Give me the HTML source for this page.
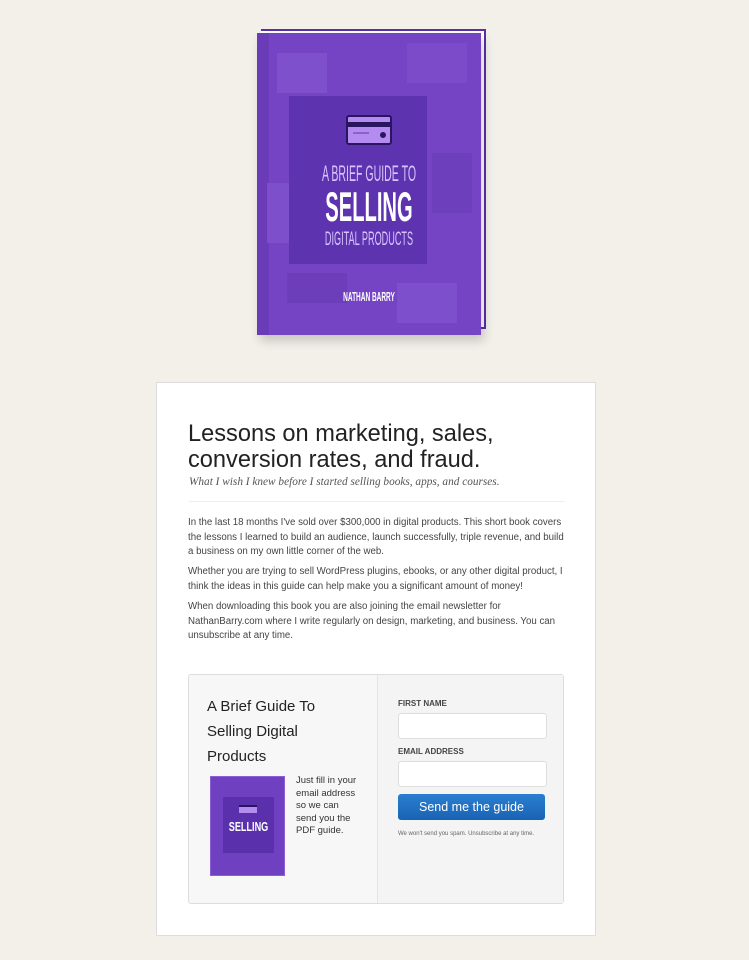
<!DOCTYPE html>
<html><head><meta charset="utf-8"><style>
*{margin:0;padding:0;box-sizing:border-box}
body{width:749px;height:960px;background:#f3f0ea;position:relative;overflow:hidden;font-family:"Liberation Sans",sans-serif;color:#333}
.abs{position:absolute}
.book{left:257px;top:29px;width:229px;height:306px}
.cover{left:0;top:4px;width:224px;height:302px;background:#7544c4;box-shadow:3px 6px 10px rgba(0,0,0,.18)}
.pages{left:4px;top:0;width:225px;height:300px;background:#fff;border:2px solid #5a2fa8;border-left:none}
.blk{position:absolute}
.inner{left:32px;top:63px;width:138px;height:168px;background:#5d33b0}
.t{position:absolute;width:100%;text-align:center;color:#d9c4ff;font-family:"Liberation Sans Narrow","Liberation Sans",sans-serif;transform:scaleX(.48)}
.card{left:156px;top:382px;width:440px;height:554px;background:#fff;border:1px solid #ddd}
h1{position:absolute;left:31px;top:38px;font-weight:normal;font-size:23.6px;line-height:26px;color:#222;font-family:"Liberation Sans",sans-serif}
.sub{position:absolute;left:32px;top:93px;font-family:"Liberation Serif",serif;font-style:italic;font-size:11.3px;color:#555}
.hr{position:absolute;left:32px;top:118px;width:376px;height:1px;background:#eee}
.p{position:absolute;left:31px;font-size:9.7px;line-height:14.5px;color:#444;white-space:nowrap}
.form{left:31px;top:291px;width:376px;height:230px;border:1px solid #ddd;border-radius:3px;background:#f7f7f7}
.right{left:188px;top:0;width:186px;height:228px;border-left:1px solid #e4e4e4;background:#f4f4f4}
.lab{position:absolute;left:20px;font-size:8px;font-weight:bold;color:#444}
.inp{position:absolute;left:20px;width:149px;height:26px;background:#fff;border:1px solid #ddd;border-radius:3px}
.btn{position:absolute;left:20px;top:119px;width:147px;height:26px;border-radius:3px;background:linear-gradient(#2a7fd0,#1a62b3);color:#fff;font-size:12.5px;text-align:center;line-height:26px}
</style></head><body>
<div class="abs book">
 <div class="abs pages"></div>
 <div class="abs cover">
  <div class="blk" style="left:0;top:0;width:12px;height:302px;background:#6a3cb8"></div>
  <div class="blk" style="left:20px;top:20px;width:50px;height:40px;background:#7f50cc"></div>
  <div class="blk" style="left:150px;top:10px;width:60px;height:40px;background:#7b4bc9"></div>
  <div class="blk" style="left:10px;top:150px;width:25px;height:60px;background:#7e4fcb"></div>
  <div class="blk" style="left:175px;top:120px;width:40px;height:60px;background:#6d3fbd"></div>
  <div class="blk" style="left:30px;top:240px;width:60px;height:30px;background:#6c3eba"></div>
  <div class="blk" style="left:140px;top:250px;width:60px;height:40px;background:#7e4fcc"></div>
  <div class="abs inner"></div>
  <div class="blk" style="left:89px;top:82px;width:46px;height:30px;background:#b48cf0;border:2px solid #2a1560;border-radius:3px">
   <div style="position:absolute;left:0;top:5px;width:100%;height:5px;background:#2a1560"></div>
   <div style="position:absolute;left:5px;top:15px;width:16px;height:2px;background:#8a62cc"></div>
   <div style="position:absolute;right:4px;top:15px;width:6px;height:6px;border-radius:50%;background:#2a1560"></div>
  </div>
  <div class="t" style="top:128px;font-size:22px">A BRIEF GUIDE TO</div>
  <div class="t" style="top:150px;font-size:42px;font-weight:bold;color:#fff">SELLING</div>
  <div class="t" style="top:196px;font-size:19px">DIGITAL PRODUCTS</div>
  <div class="t" style="top:256px;font-size:13px;color:#fff;font-weight:bold;transform:scaleX(.5)">NATHAN BARRY</div>
 </div>
</div>
<div class="abs card">
 <h1>Lessons on marketing, sales,<br>conversion rates, and fraud.</h1>
 <div class="sub">What I wish I knew before I started selling books, apps, and courses.</div>
 <div class="hr"></div>
 <div class="p" style="top:133px">In the last 18 months I've sold over $300,000 in digital products. This short book covers<br>the lessons I learned to build an audience, launch successfully, triple revenue, and build<br>a business on my own little corner of the web.</div>
 <div class="p" style="top:182px">Whether you are trying to sell WordPress plugins, ebooks, or any other digital product, I<br>think the ideas in this guide can help make you a significant amount of money!</div>
 <div class="p" style="top:217px">When downloading this book you are also joining the email newsletter for<br>NathanBarry.com where I write regularly on design, marketing, and business. You can<br>unsubscribe at any time.</div>
 <div class="abs form">
  <div class="abs" style="left:18px;top:19px;font-size:15px;line-height:25px;color:#222">A Brief Guide To<br>Selling Digital<br>Products</div>
  <div class="abs" style="left:21px;top:101px;width:75px;height:100px;background:#6f41c0;border:1px solid #8a5fd6">
   <div class="abs" style="left:12px;top:20px;width:51px;height:56px;background:#5a30ad"></div>
   <div class="abs" style="left:28px;top:28px;width:18px;height:8px;background:#b48cf0;border-top:2px solid #2a1560"></div>
   <div class="abs" style="left:0;top:42px;width:75px;text-align:center;color:#fff;font-size:13px;font-weight:bold;transform:scaleX(.7)">SELLING</div>
  </div>
  <div class="abs" style="left:107px;top:100px;font-size:9.5px;line-height:12.6px;color:#333">Just fill in your<br>email address<br>so we can<br>send you the<br>PDF guide.</div>
  <div class="abs right">
   <div class="lab" style="top:24px">FIRST NAME</div>
   <div class="inp" style="top:38px"></div>
   <div class="lab" style="top:72px">EMAIL ADDRESS</div>
   <div class="inp" style="top:86px"></div>
   <div class="btn">Send me the guide</div>
   <div class="abs" style="left:20px;top:156px;font-size:6px;color:#666">We won't send you spam. Unsubscribe at any time.</div>
  </div>
 </div>
</div>
</body></html>
